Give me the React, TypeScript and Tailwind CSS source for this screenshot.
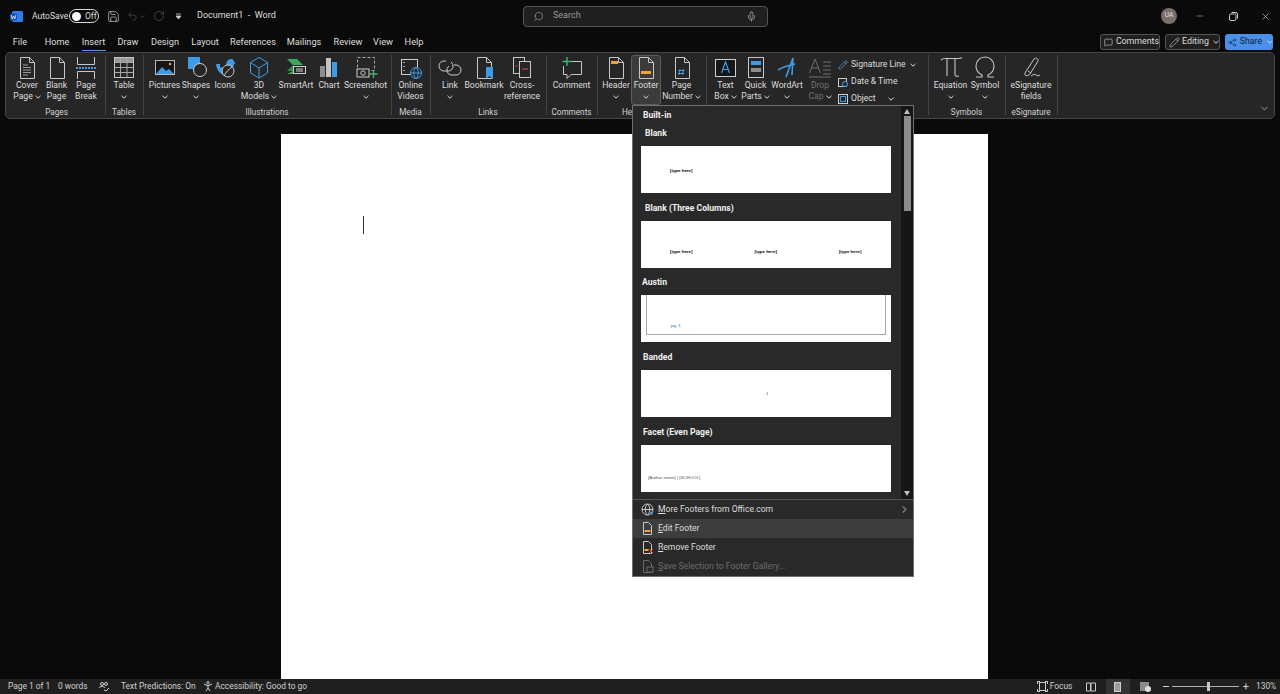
import React from 'react'
import { Search, Mic, Minus, X, Save, Undo2, RotateCw, MessageSquare, Pencil, Share2, ChevronRight, ChevronDown } from 'lucide-react'

const light = '#c8c8c8'
const blue = '#3f9be6'
const orange = '#f2a33a'

function Chev({ className = '' }: { className?: string }) {
  return (
    <svg width="6" height="4" viewBox="0 0 6 4" className={`inline-block ${className}`}>
      <path d="M0.5 0.8 3 3.2 5.5 0.8" fill="none" stroke="#d8d8d8" strokeWidth="1" />
    </svg>
  )
}

function Ic({ w = 24, h = 24, children, className = '' }: { w?: number; h?: number; children: React.ReactNode; className?: string }) {
  return (
    <svg width={w} height={h} viewBox={`0 0 ${w} ${h}`} fill="none" stroke={light} strokeWidth="1" className={className}>
      {children}
    </svg>
  )
}

const docPath = 'M5.5 1.5h9l5 5v16h-14z M14.5 1.5v5h5'

const icons: Record<string, React.ReactNode> = {
  cover: (
    <Ic>
      <path d={docPath} />
      <path d="M8 9h5M8 11.5h8M8 14h8M8 16.5h8M8 19h5" stroke="#9a9a9a" />
    </Ic>
  ),
  blank: <Ic><path d={docPath} /></Ic>,
  pagebreak: (
    <Ic>
      <path d="M3.5 1v7.5h17V1M3.5 23v-7.5h17V23" />
      <path d="M2 12h20" stroke={blue} strokeWidth="2" strokeDasharray="2 1" />
    </Ic>
  ),
  table: (
    <Ic>
      <rect x="2.5" y="1.5" width="19" height="20" stroke="#c4c4c4" />
      <rect x="3" y="2" width="18" height="4" fill="#9a9a9a" stroke="none" />
      <path d="M2.5 6.5h19M2.5 11.5h19M2.5 16.5h19M8.5 2v19M15 2v19" stroke="#a8a8a8" />
    </Ic>
  ),
  pictures: (
    <Ic>
      <rect x="2.5" y="4.5" width="19" height="14" stroke="#b8b8b8" fill="#161616" />
      <path d="M3 18l6-7 4 4 3-2 5 5z" fill={blue} stroke="none" />
      <circle cx="17" cy="8" r="1.2" fill={orange} stroke="none" />
    </Ic>
  ),
  shapes: (
    <Ic>
      <rect x="4" y="1" width="12" height="12" fill={blue} stroke="none" />
      <circle cx="16" cy="14" r="6.5" fill="#262626" stroke="#d0d0d0" />
    </Ic>
  ),
  iconsI: (
    <Ic>
      <path d="M3 8h4v3c2 1 5 1 6-1 0-3 1-7 5-7 2 0 3 1 3 3l2 1-2 1c0 4-3 7-6 7l-3 4c-4 0-8-4-9-11z" fill={blue} stroke="none" />
      <circle cx="15" cy="15" r="6" fill="#262626" stroke="#cfcfcf" />
      <path d="M11 20c2-4 4-6 8-9" stroke="#cfcfcf" />
    </Ic>
  ),
  models: (
    <Ic>
      <path d="M12 1.5l8.5 5v10.5L12 22l-8.5-5V6.5z M3.5 6.5L12 12l8.5-5.5M12 12v10" stroke={blue} />
    </Ic>
  ),
  smartart: (
    <Ic>
      <path d="M3 3h10l6 6H9z" fill="#3fa85a" stroke="none" />
      <path d="M3 15h6V9l-3 3z" fill="#2e8b4a" stroke="none" />
      <path d="M3 18h6v-3z" fill="#3fa85a" stroke="none" />
      <rect x="9.5" y="10.5" width="12" height="7" fill="#262626" stroke="#cfcfcf" />
      <path d="M12 13h7M12 15h7" stroke="#cfcfcf" />
    </Ic>
  ),
  chart: (
    <Ic>
      <rect x="3" y="10" width="5" height="11" fill="#8e8e8e" stroke="none" />
      <rect x="9" y="2" width="5" height="19" fill="#c4c4c4" stroke="none" />
      <rect x="15" y="6" width="5" height="15" fill={blue} stroke="none" />
    </Ic>
  ),
  screenshot: (
    <Ic>
      <rect x="3.5" y="1.5" width="17" height="13" strokeDasharray="3 2" stroke="#a8a8a8" />
      <rect x="3" y="13" width="12" height="8" fill="#262626" stroke="#cfcfcf" />
      <circle cx="9" cy="17" r="2.2" stroke="#cfcfcf" />
      <path d="M19.5 14v8M15.5 18h8" stroke="#45b36b" strokeWidth="1.3" />
    </Ic>
  ),
  videos: (
    <Ic>
      <rect x="2.5" y="3.5" width="16" height="15" stroke="#cfcfcf" />
      <path d="M5 6v1M5 10v1M5 14v1" stroke="#cfcfcf" strokeWidth="1.5" />
      <circle cx="17" cy="17" r="5.5" fill="#262626" stroke={blue} />
      <path d="M11.5 17h11M17 11.5c-3 3-3 8 0 11M17 11.5c3 3 3 8 0 11" stroke={blue} />
    </Ic>
  ),
  link: (
    <Ic>
      <path d="M8 5H6a5 5 0 000 10h5a5 5 0 002-9" />
      <path d="M16 9h2a5 5 0 010 10h-5a5 5 0 01-2-9" />
    </Ic>
  ),
  bookmark: (
    <Ic>
      <path d="M5.5 1.5h9l5 5v16h-14z M14.5 1.5v5h5" />
      <path d="M14 11h7v12l-3.5-3-3.5 3z" fill={blue} stroke="none" />
    </Ic>
  ),
  crossref: (
    <Ic>
      <rect x="3.5" y="1.5" width="11" height="16" />
      <rect x="9.5" y="5.5" width="11" height="16" fill="#262626" />
      <path d="M5.5 10h2M12 13h6" stroke="#d9534f" strokeWidth="1.2" />
    </Ic>
  ),
  comment: (
    <Ic>
      <path d="M6 5.5h15.5v13H11l-4 4v-4H3.5V10" />
      <path d="M7 1v9M2.5 5.5h9" stroke="#45b36b" strokeWidth="1.4" />
    </Ic>
  ),
  header: (
    <Ic>
      <path d={docPath} />
      <rect x="7" y="5" width="7" height="3" fill={orange} stroke="none" />
    </Ic>
  ),
  footer: (
    <Ic>
      <path d={docPath} />
      <rect x="7" y="15" width="10" height="3" fill={orange} stroke="none" />
    </Ic>
  ),
  pagenumber: (
    <Ic>
      <path d={docPath} />
      <path d="M10 13l-1 6M13.5 13l-1 6M8.5 14.5h6M8 17.5h6" stroke={blue} />
    </Ic>
  ),
  textbox: (
    <Ic>
      <rect x="1.5" y="3.5" width="20" height="17" fill="#161616" stroke="#cfcfcf" />
      <path d="M7.5 17l4-11 4 11M9 13.5h5" stroke={blue} strokeWidth="1.2" />
    </Ic>
  ),
  quickparts: (
    <Ic>
      <rect x="4.5" y="1.5" width="15" height="20" />
      <rect x="7" y="5" width="10" height="4" fill={blue} stroke="none" />
      <rect x="7" y="12" width="10" height="4" fill="#8e8e8e" stroke="none" />
    </Ic>
  ),
  wordart: (
    <Ic>
      <path d="M3 14c5-3 12-5 17-6M18 2L11 21M18 2l-1 17" stroke={blue} strokeWidth="1.6" />
    </Ic>
  ),
  dropcap: (
    <Ic>
      <path d="M1.5 17L7 3l5.500 14M3.500 12h7M1 21h22M15 6h8M15 10h8M15 14h8M15 18h8" stroke="#6e6e6e" />
    </Ic>
  ),
  equation: (
    <Ic>
      <path d="M2 4c1-1 2-1.500 4-1.500h14c1 0 2-.5 3-1M8 3v17M16 3v15c0 2 1 2.500 4 2" strokeWidth="1.1" />
    </Ic>
  ),
  symbol: (
    <Ic>
      <path d="M3 21h6v-2c-4-2-6-5-6-9a9 9 0 0118 0c0 4-2 7-6 9v2h6" strokeWidth="1.1" />
    </Ic>
  ),
  esig: (
    <Ic>
      <path d="M6 17L15 3c2-2 5 0 4 2l-8 13c-2 2-6 3-5-1zM9 15l3 2" />
      <path d="M12 20c3-2 4-2 5-1s3 1 4 0" />
    </Ic>
  ),
}

function Btn({ w, icon, l1, l2, chev, active, dim }: { w: number; icon: string; l1: string; l2?: string; chev?: boolean; active?: boolean; dim?: boolean }) {
  return (
    <div
      style={{ width: w }}
      className={`h-[50px] shrink-0 flex flex-col items-center rounded-[3px] border ${active ? 'bg-[#3b3b3b] border-[#5c5c5c]' : 'border-transparent'} ${dim ? 'text-[#707070]' : 'text-[#dedede]'}`}
    >
      <div className="h-[24px] flex items-center justify-center">{icons[icon]}</div>
      <div className="text-[8.6px] leading-[11px] whitespace-nowrap">{l1}</div>
      <div className="text-[8.6px] leading-[11px] whitespace-nowrap flex items-center gap-[2px] h-[11px]">
        {l2}
        {chev && <Chev />}
      </div>
    </div>
  )
}

function Group({ label, children }: { label: string; children: React.ReactNode }) {
  return (
    <div className="h-[60px] shrink-0 pl-[3px] pr-[4px] border-r border-[#444444] flex flex-col">
      <div className="flex">{children}</div>
      <div className="text-[8.2px] leading-[14px] text-center text-[#d4d4d4] whitespace-nowrap">{label}</div>
    </div>
  )
}

const tabs: [string, number][] = [
  ['File', 28], ['Home', 46], ['Insert', 27], ['Draw', 42], ['Design', 32], ['Layout', 48],
  ['References', 48], ['Mailings', 54], ['Review', 34], ['View', 36], ['Help', 26],
]

function Thumb({ label, indent, children }: { label: string; indent: string; children?: React.ReactNode }) {
  return (
    <div>
      <div className={`h-[27.75px] flex items-end pb-[7px] text-[8.6px] leading-[12px] font-bold text-[#f0f0f0] ${indent}`}>{label}</div>
      <div className="ml-[8px] w-[250px] h-[47px] bg-white overflow-hidden text-[4.4px] leading-[6px] text-black font-['Liberation_Sans',sans-serif]">
        {children}
      </div>
    </div>
  )
}

function DocMini({ children }: { children: React.ReactNode }) {
  return (
    <svg width="13" height="13" viewBox="0 0 13 13" fill="none" stroke="#c8c8c8" strokeWidth="1" className="shrink-0">
      <path d="M2.500.5h5l3 3v9h-8z" />
      {children}
    </svg>
  )
}

function MenuRow({ icon, first, rest, active, dim, arrow }: { icon: React.ReactNode; first: string; rest: string; active?: boolean; dim?: boolean; arrow?: boolean }) {
  return (
    <div className={`h-[19px] flex items-center pl-[8px] pr-[3px] ${active ? 'bg-[#3d3d3d]' : ''} ${dim ? 'text-[#6b6b6b]' : 'text-[#dedede]'}`}>
      <div className="w-[17px] flex justify-start">{icon}</div>
      <span className="text-[8.6px] whitespace-nowrap">
        <span className="underline">{first}</span>
        {rest}
      </span>
      {arrow && <ChevronRight className="ml-auto w-[11px] h-[11px] text-[#d8d8d8]" />}
    </div>
  )
}

export default function App() {
  return (
    <div className="relative w-[1280px] h-[694px] overflow-hidden bg-[#0a0a0a] flex flex-col font-['Roboto',sans-serif] text-[#dedede]">
      {/* title bar */}
      <div className="h-[32px] shrink-0 flex items-center pl-[10px]">
        <svg width="13" height="13" viewBox="0 0 13 13" className="shrink-0">
          <rect x="2" y="1" width="11" height="11" rx="1.500" fill="#2f7fe8" />
          <rect x="0" y="3.500" width="7" height="7" rx="1" fill="#1450b8" />
          <path d="M1.200 5l1 4 1.300-3 1.300 3 1-4" stroke="#fff" strokeWidth=".7" fill="none" />
        </svg>
        <span className="ml-[9px] w-[37px] text-[8.6px] whitespace-nowrap">AutoSave</span>
        <div className="w-[30px] h-[14px] rounded-full border border-[#d8d8d8] flex items-center pl-[2px]">
          <span className="w-[9px] h-[9px] rounded-full bg-white" />
          <span className="ml-[4px] text-[8.500px] leading-none">Off</span>
        </div>
        <Save className="ml-[8px] w-[13px] h-[13px] text-[#cfcfcf]" strokeWidth={1.3} />
        <Undo2 className="ml-[7px] w-[11px] h-[11px] text-[#5c5c5c]" strokeWidth={1.3} />
        <ChevronDown className="ml-[1px] w-[7px] h-[7px] text-[#5c5c5c]" />
        <RotateCw className="ml-[7px] w-[12px] h-[12px] text-[#5c5c5c]" strokeWidth={1.3} />
        <svg width="7" height="7" viewBox="0 0 7 7" className="ml-[10px]">
          <path d="M1 1h5M1 3h5L3.500 6z" stroke="#cfcfcf" strokeWidth=".8" fill="#cfcfcf" />
        </svg>
        <span className="ml-[15px] w-[326px] text-[9px] whitespace-nowrap">Document1&nbsp; -&nbsp; Word</span>
        <div className="w-[245px] h-[21px] rounded-[4px] bg-[#1f1f1f] border border-[#555555] flex items-center pl-[9px] pr-[10px]">
          <Search className="w-[11px] h-[11px] text-[#aaaaaa] -scale-x-100" strokeWidth={1.3} />
          <span className="ml-[9px] text-[9px] text-[#9a9a9a]">Search</span>
          <Mic className="ml-auto w-[11px] h-[11px] text-[#bbbbbb]" strokeWidth={1.5} />
        </div>
        <div className="ml-[393px] w-[16px] h-[16px] rounded-full bg-[#7a6f6a] text-[6.500px] flex items-center justify-center text-[#e8e8e8]">UA</div>
        <Minus className="ml-[18px] w-[10px] h-[10px] text-[#cfcfcf]" strokeWidth={1.2} />
        <svg width="9" height="9" viewBox="0 0 9 9" fill="none" stroke="#cfcfcf" className="ml-[24px]">
          <rect x=".5" y="2" width="6.500" height="6.500" rx="1.500" />
          <path d="M2.500.5h4.500a1.500 1.500 0 011.500 1.500v4.500" />
        </svg>
        <X className="ml-[22px] w-[11px] h-[11px] text-[#d8d8d8]" strokeWidth={1.3} />
      </div>

      {/* tabs */}
      <div className="h-[20px] shrink-0 flex items-center pl-[6px]">
        {tabs.map(([name, w]) => (
          <div key={name} style={{ width: w }} className="h-[20px] flex flex-col items-center justify-center relative text-[9.200px]">
            {name}
            {name === 'Insert' && <span className="absolute bottom-[1px] w-[24px] h-[1.500px] bg-[#5a9be6]" />}
          </div>
        ))}
        <div className="ml-auto mr-[7px] flex items-center gap-[5px]">
          <div className="w-[60px] h-[16px] rounded-[3px] border border-[#555555] bg-[#1f1f1f] flex items-center pl-[3px] gap-[3px] text-[8.800px]">
            <MessageSquare className="w-[9px] h-[9px]" strokeWidth={1.5} />
            Comments
          </div>
          <div className="w-[55px] h-[16px] rounded-[3px] border border-[#555555] bg-[#1f1f1f] flex items-center pl-[3px] gap-[2px] text-[8.800px]">
            <Pencil className="w-[11px] h-[11px]" strokeWidth={1.2} />
            Editing
            <Chev className="ml-[2px]" />
          </div>
          <div className="w-[48px] h-[16px] rounded-[3px] bg-[#4a8fe8] text-[#10243f] flex items-center pl-[3px] gap-[3px] text-[8.800px]">
            <Share2 className="w-[9px] h-[9px]" strokeWidth={1.5} />
            Share
            <Chev className="ml-[2px]" />
          </div>
        </div>
      </div>

      {/* ribbon */}
      <div className="mx-[5px] h-[67px] shrink-0 rounded-[5px] bg-[#262626] border border-[#454545] flex pt-[2px] pl-[3px]">
        <Group label="Pages">
          <Btn w={30} icon="cover" l1="Cover" l2="Page" chev />
          <Btn w={29} icon="blank" l1="Blank" l2="Page" />
          <Btn w={30} icon="pagebreak" l1="Page" l2="Break" />
        </Group>
        <Group label="Tables">
          <Btn w={30} icon="table" l1="Table" chev />
        </Group>
        <Group label="Illustrations">
          <Btn w={35} icon="pictures" l1="Pictures" chev />
          <Btn w={28} icon="shapes" l1="Shapes" chev />
          <Btn w={30} icon="iconsI" l1="Icons" />
          <Btn w={38} icon="models" l1="3D" l2="Models" chev />
          <Btn w={36} icon="smartart" l1="SmartArt" />
          <Btn w={30} icon="chart" l1="Chart" />
          <Btn w={43} icon="screenshot" l1="Screenshot" chev />
        </Group>
        <Group label="Media">
          <Btn w={31} icon="videos" l1="Online" l2="Videos" />
        </Group>
        <Group label="Links">
          <Btn w={32} icon="link" l1="Link" chev />
          <Btn w={36} icon="bookmark" l1="Bookmark" />
          <Btn w={40} icon="crossref" l1="Cross-" l2="reference" />
        </Group>
        <Group label="Comments">
          <Btn w={43} icon="comment" l1="Comment" />
        </Group>
        <Group label="Header & Footer">
          <Btn w={30} icon="header" l1="Header" chev />
          <Btn w={30} icon="footer" l1="Footer" chev active />
          <Btn w={41} icon="pagenumber" l1="Page" l2="Number" chev />
        </Group>
        <Group label="Text">
          <div className="flex">
            <Btn w={31} icon="textbox" l1="Text" l2="Box" chev />
            <Btn w={29} icon="quickparts" l1="Quick" l2="Parts" chev />
            <Btn w={34} icon="wordart" l1="WordArt" chev />
            <Btn w={32} icon="dropcap" l1="Drop" l2="Cap" chev dim />
            <div className="w-[88px] pt-[1px] pl-[2px] text-[8.600px] flex flex-col whitespace-nowrap">
              <div className="h-[17px] flex items-center gap-[3px]">
                <Pencil className="w-[10px] h-[10px] text-[#6db3ee]" strokeWidth={1.4} />
                Signature Line
                <Chev className="ml-auto mr-[8px]" />
              </div>
              <div className="h-[17px] flex items-center gap-[3px]">
                <svg width="10" height="10" viewBox="0 0 10 10" fill="none" stroke="#cfcfcf">
                  <rect x=".5" y="1.500" width="8" height="8" />
                  <circle cx="7" cy="7" r="2.500" fill="#262626" stroke={blue} />
                </svg>
                Date &amp; Time
              </div>
              <div className="h-[17px] flex items-center gap-[3px]">
                <svg width="10" height="10" viewBox="0 0 10 10" fill="none" stroke="#cfcfcf">
                  <rect x=".5" y=".5" width="9" height="9" />
                  <rect x="2.500" y="2.500" width="5" height="5" stroke={blue} />
                </svg>
                Object
                <Chev className="ml-[9px]" />
              </div>
            </div>
          </div>
        </Group>
        <Group label="Symbols">
          <Btn w={37} icon="equation" l1="Equation" chev />
          <Btn w={32} icon="symbol" l1="Symbol" chev />
        </Group>
        <Group label="eSignature">
          <Btn w={44} icon="esig" l1="eSignature" l2="fields" />
        </Group>
        <div className="ml-auto self-end mb-[4px] mr-[4px]">
          <ChevronDown className="w-[11px] h-[11px] text-[#d8d8d8]" strokeWidth={1.5} />
        </div>
      </div>

      {/* document */}
      <div className="flex-1 min-h-0 overflow-hidden pl-[281px] pt-[15px]">
        <div className="w-[707px] h-full bg-white pt-[82px] pl-[82px]">
          <div className="w-[1px] h-[18px] bg-[#333333]" />
        </div>
      </div>

      {/* status bar */}
      <div className="h-[15px] shrink-0 bg-[#1f1f1f] flex items-center pl-[8px] text-[8.400px] text-[#d0d0d0]">
        <span className="w-[50px] whitespace-nowrap">Page 1 of 1</span>
        <span className="w-[40px] whitespace-nowrap">0 words</span>
        <svg width="11" height="11" viewBox="0 0 11 11" fill="none" stroke="#d0d0d0" className="shrink-0">
          <circle cx="4" cy="3" r="1.500" />
          <circle cx="8" cy="3" r="1.500" />
          <path d="M1 7c1-2 5-2 6 0M6 9l2 1 3-3" />
        </svg>
        <span className="ml-[12px] w-[82px] whitespace-nowrap">Text Predictions: On</span>
        <svg width="11" height="11" viewBox="0 0 11 11" fill="none" stroke="#d0d0d0" className="shrink-0">
          <circle cx="5" cy="1.800" r="1.200" />
          <path d="M1 3l3 1.500h2L9 3M5 4.500V7L3 10M5 7l2 3" />
        </svg>
        <span className="ml-[1px] whitespace-nowrap">Accessibility: Good to go</span>
        <div className="ml-auto flex items-center pr-[5px]">
          <svg width="11" height="11" viewBox="0 0 11 11" fill="none" stroke="#d0d0d0">
            <rect x="2.500" y="1.500" width="6" height="8" />
            <path d="M.5 3V.5H3M8 .5h2.500V3M.5 8v2.500H3M8 10.500h2.500V8" />
          </svg>
          <span className="ml-[2px] w-[36px]">Focus</span>
          <svg width="10" height="10" viewBox="0 0 10 10" fill="none" stroke="#c8c8c8">
            <path d="M.5 1h4v8h-4zM5 1h4.500v8H5z" />
          </svg>
          <div className="ml-[10px] w-[24px] h-[15px] bg-[#333333] flex items-center justify-center">
            <div className="w-[7px] h-[10px] bg-[#9a9a9a] border border-[#d0d0d0]" />
          </div>
          <svg width="11" height="11" viewBox="0 0 11 11" className="ml-[10px]">
            <rect x="0" y="1" width="9" height="9" fill="#8a8a8a" />
            <circle cx="8" cy="8" r="3" fill="#e0e0e0" />
          </svg>
          <span className="ml-[12px] w-[6px] h-[1px] bg-[#d0d0d0]" />
          <div className="ml-[3px] w-[67px] h-[1px] bg-[#b0b0b0] flex items-center pl-[35px]">
            <span className="w-[3px] h-[9px] bg-[#c8c8c8]" />
          </div>
          <span className="ml-[4px] text-[11px] leading-none text-[#d0d0d0]">+</span>
          <span className="ml-[7px] w-[19px] whitespace-nowrap">130%</span>
        </div>
      </div>

      {/* footer gallery menu */}
      <div className="absolute left-[632px] top-[105px] w-[282px] h-[472px] bg-[#292929] border border-[#707070] flex flex-col">
        <div className="h-[393px] flex">
          <div className="w-[268px] overflow-hidden">
            <div className="h-[12px] pl-[10px] pt-[3px] text-[8.6px] leading-[12px] font-bold text-[#f0f0f0]">Built-in</div>
            <Thumb label="Blank" indent="pl-[12px]">
              <div className="pl-[29px] pt-[22px] font-bold">[type here]</div>
            </Thumb>
            <Thumb label="Blank (Three Columns)" indent="pl-[12px]">
              <div className="pl-[29px] pt-[28px] font-bold flex gap-[62px]">
                <span>[type here]</span>
                <span>[type here]</span>
                <span>[type here]</span>
              </div>
            </Thumb>
            <Thumb label="Austin" indent="pl-[9px]">
              <div className="ml-[5px] w-[240px] h-[40px] border border-t-0 border-[#a8a8a8] pl-[24px] pt-[28px] text-[#3a5fa8]">pg. 1</div>
            </Thumb>
            <Thumb label="Banded" indent="pl-[10px]">
              <div className="pl-[125px] pt-[21px] text-[#3a5fa8]">1</div>
            </Thumb>
            <Thumb label="Facet (Even Page)" indent="pl-[10px]">
              <div className="pl-[7px] pt-[30px] text-[#555555] whitespace-nowrap">[Author name] | [SCHOOL]</div>
            </Thumb>
          </div>
          <div className="w-[12px] bg-[#161616] flex flex-col items-center">
            <span className="mt-[3px] w-0 h-0 border-x-[3.500px] border-x-transparent border-b-[5px] border-b-[#bdbdbd]" />
            <span className="mt-[2px] w-[7px] h-[95px] bg-[#8a8a8a]" />
            <span className="mt-auto mb-[3px] w-0 h-0 border-x-[3.500px] border-x-transparent border-t-[5px] border-t-[#bdbdbd]" />
          </div>
        </div>
        <div className="border-t border-[#555555]">
          <MenuRow
            first="M"
            rest="ore Footers from Office.com"
            arrow
            icon={
              <svg width="13" height="13" viewBox="0 0 13 13" fill="none" stroke="#c8c8c8">
                <circle cx="6.500" cy="6.500" r="5.500" />
                <path d="M1 6.500h11M6.500 1c-3 3-3 8 0 11M6.500 1c3 3 3 8 0 11" />
                <circle cx="10.500" cy="10" r="1.500" fill={blue} stroke="none" />
              </svg>
            }
          />
          <MenuRow
            first="E"
            rest="dit Footer"
            active
            icon={
              <DocMini>
                <rect x="3.500" y="8" width="6" height="2" fill={orange} stroke="none" />
              </DocMini>
            }
          />
          <MenuRow
            first="R"
            rest="emove Footer"
            icon={
              <DocMini>
                <rect x="3.500" y="8" width="4" height="2" fill={orange} stroke="none" />
                <path d="M8 8l4 4M12 8l-4 4" stroke="#e04a4a" />
              </DocMini>
            }
          />
          <MenuRow
            first="S"
            rest="ave Selection to Footer Gallery..."
            dim
            icon={
              <svg width="13" height="13" viewBox="0 0 13 13" fill="none" stroke="#6b6b6b">
                <path d="M2.500.5h5l3 3v9h-8z" />
                <rect x="6" y="7" width="6" height="5" fill="#292929" />
              </svg>
            }
          />
        </div>
      </div>
    </div>
  )
}
